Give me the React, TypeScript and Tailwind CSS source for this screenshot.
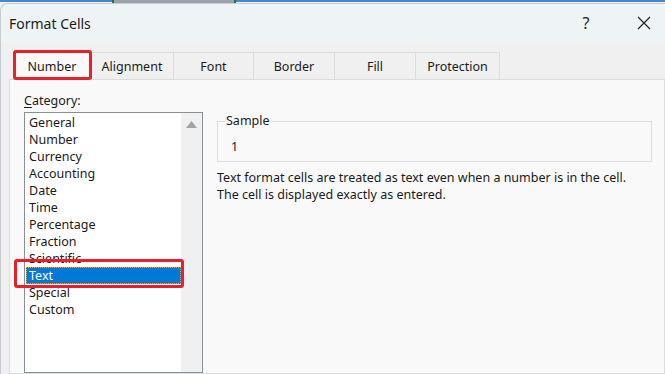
import React from "react";

const categories = [
  "General",
  "Number",
  "Currency",
  "Accounting",
  "Date",
  "Time",
  "Percentage",
  "Fraction",
  "Scientific",
  "Text",
  "Special",
  "Custom",
];

const tabs = [
  { label: "Number", w: "w-[78px]" },
  { label: "Alignment", w: "w-[83px]" },
  { label: "Font", w: "w-[80px]" },
  { label: "Border", w: "w-[81px]" },
  { label: "Fill", w: "w-[81px]" },
  { label: "Protection", w: "w-[84px]" },
];

export default function App() {
  return (
    <div className="relative w-[665px] h-[374px] overflow-hidden bg-[#f0f0f0] text-[#1a1a1a] font-['Noto_Sans',sans-serif]">
      {/* Excel strip behind the dialog */}
      <div className="flex h-[3px] bg-[#eef4f5]">
        <div className="w-[112px] border-t-2 border-[#4a86c8]" />
        <div className="w-[2px] bg-[#217346]" />
        <div className="w-[120px] bg-[#9aa3ad]" />
        <div className="w-[2px] bg-[#217346]" />
        <div className="flex-1 border-t-2 border-[#4a86c8]" />
      </div>

      {/* Dialog window */}
      <div className="flex flex-col h-[371px] rounded-tl-[8px] border-l border-t border-[#c8ccd0] bg-[#f0f0f0]">
        {/* Title bar */}
        <div className="flex items-center justify-between h-[38px] rounded-tl-[8px] bg-[#eef4f5] pl-[8px] pr-[6px]">
          <span className="text-[14px] text-[#1a1a1a]">Format Cells</span>
          <div className="flex items-center gap-[33px]">
            <span className="w-[20px] text-center text-[16px] leading-none text-[#222]">?</span>
            <div className="w-[30px] flex justify-center">
              <svg width="14" height="14" viewBox="0 0 14 14">
                <path d="M1 1 L13 13 M13 1 L1 13" stroke="#222" strokeWidth="1.2" fill="none" />
              </svg>
            </div>
          </div>
        </div>

        {/* Body */}
        <div className="flex flex-col flex-1 pl-[8px] pt-[10px]">
          {/* Tabs */}
          <div className="flex h-[27px] pl-[4px]">
            {tabs.map((t, i) => (
              <div
                key={t.label}
                className={`${t.w} flex items-center justify-center pt-[2px] text-[12.5px] border-t border-r border-[#dcdcdc] ${
                  i === 0 ? "bg-[#f9f9f9] border-l" : "bg-[#f0f0f0]"
                }`}
              >
                {t.label}
              </div>
            ))}
          </div>

          {/* Tab panel */}
          <div className="flex flex-1 border border-[#dcdcdc] bg-[#f9f9f9] pl-[14px] pr-[12px] pt-[12px] gap-[14px]">
            {/* Category */}
            <div className="flex flex-col w-[179px]">
              <div className="text-[12.5px] leading-[17px] h-[20px]">
                <span className="underline underline-offset-2">C</span>ategory:
              </div>
              <div className="flex flex-1 border border-[#8a8f96] bg-white">
                <div className="flex flex-col flex-1 pt-[1px] pl-[1px]">
                  {categories.map((c) =>
                    c === "Text" ? (
                      <div
                        key={c}
                        className="h-[17px] leading-[15px] text-[12.5px] pl-[2px] bg-[#0078d7] text-white border border-dotted border-[#f7a540]"
                      >
                        {c}
                      </div>
                    ) : (
                      <div key={c} className="h-[17px] leading-[17px] text-[12.5px] pl-[3px]">
                        {c}
                      </div>
                    )
                  )}
                </div>
                <div className="w-[21px] bg-[#f0f0f0] flex justify-center pt-[8px]">
                  <svg width="11" height="7" viewBox="0 0 11 7">
                    <path d="M5.5 0 L11 7 L0 7 Z" fill="#a3a3a3" />
                  </svg>
                </div>
              </div>
            </div>

            {/* Sample & description */}
            <div className="flex flex-col flex-1 pt-[29px]">
              <div className="relative h-[41px] border border-[#dcdcdc] w-[435px]">
                <span className="absolute left-[7px] top-[-10px] bg-[#f9f9f9] px-[1px] text-[12.5px] leading-[17px]">
                  Sample
                </span>
                <div className="pt-[16px] pl-[13px] text-[12.5px] leading-[17px]">1</div>
              </div>
              <div className="mt-[8px] text-[12.5px] leading-[16.5px]">
                <div>Text format cells are treated as text even when a number is in the cell.</div>
                <div>The cell is displayed exactly as entered.</div>
              </div>
            </div>
          </div>
        </div>
      </div>

      {/* Red highlight boxes */}
      <div className="absolute left-[13px] top-[50px] w-[79px] h-[30px] border-[3px] border-[#e8202a] rounded-[3px]" />
      <div className="absolute left-[14px] top-[259px] w-[170px] h-[29px] border-[3px] border-[#e8202a] rounded-[3px]" />
    </div>
  );
}
